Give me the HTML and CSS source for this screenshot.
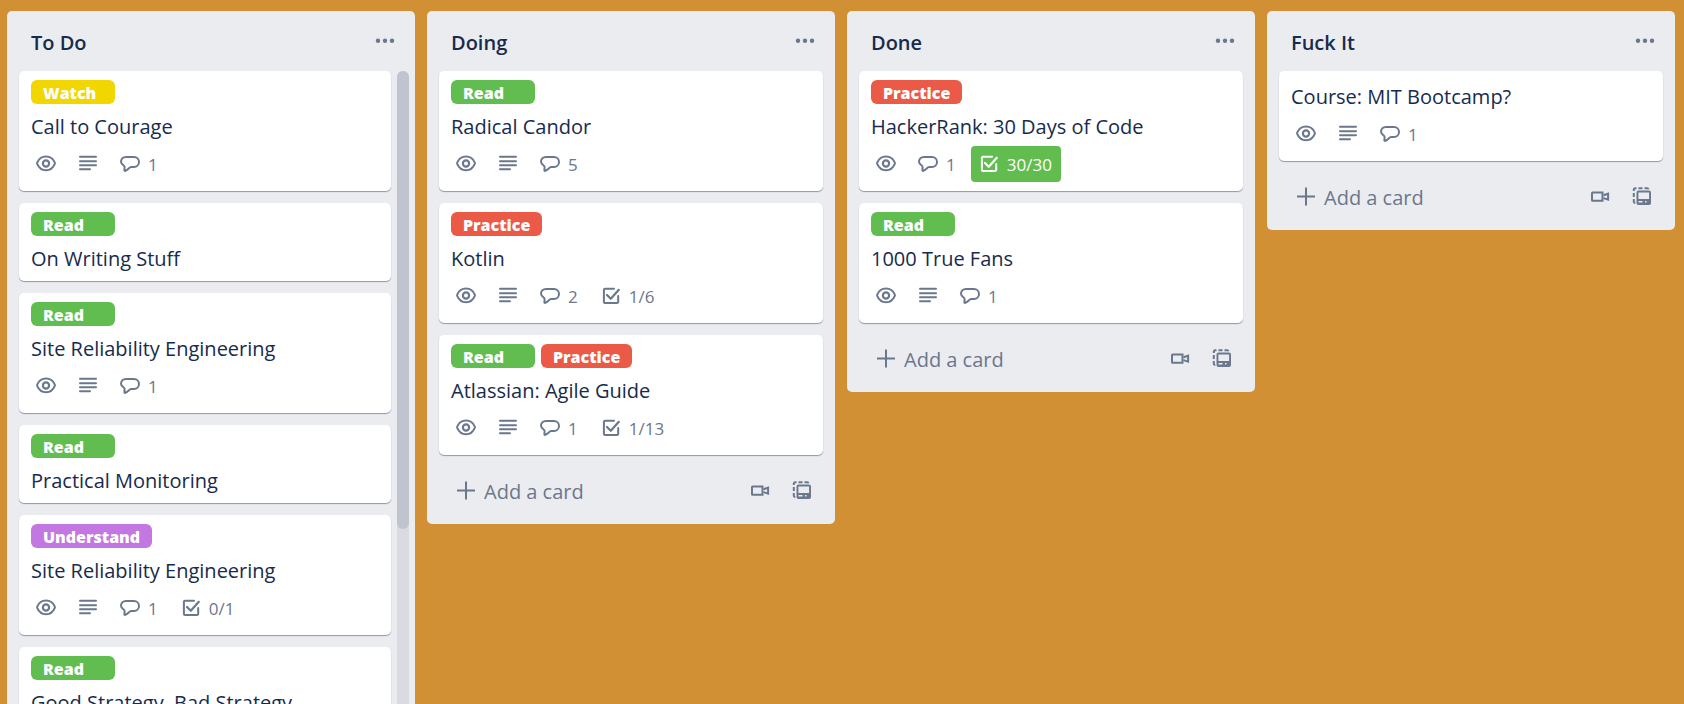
FILE: index.html
```html
<!DOCTYPE html>
<html lang="en">
<head>
    <meta charset="UTF-8">
    <meta name="viewport" content="width=device-width, initial-scale=1.0">
    <title>Learning Board</title>
    <link rel="stylesheet" href="styles.css">
</head>
<body>
    <!-- Icon sprite -->
    <svg class="sprite" aria-hidden="true">
        <symbol id="icon-more" viewBox="0 0 24 24">
            <circle cx="5" cy="11.700" r="2.200" fill="currentColor"/>
            <circle cx="12" cy="11.700" r="2.200" fill="currentColor"/>
            <circle cx="19" cy="11.700" r="2.200" fill="currentColor"/>
        </symbol>
        <symbol id="icon-eye" viewBox="0 0 24 24">
            <path d="M12 4.500c4.200 0 7.300 2.600 8.800 6.100a2 2 0 0 1 0 1.300C19.300 15.500 16.200 18.300 12 18.300S4.700 15.500 3.200 11.900a2 2 0 0 1 0-1.300C4.700 7.100 7.800 4.500 12 4.500z" fill="none" stroke="currentColor" stroke-width="2"/>
            <circle cx="12" cy="11.500" r="3.100" fill="none" stroke="currentColor" stroke-width="2.200"/>
        </symbol>
        <symbol id="icon-description" viewBox="0 0 24 24">
            <path d="M4 4.700h16M4 9.200h16M4 13.300h16M4 17.300h10" fill="none" stroke="currentColor" stroke-width="2" stroke-linecap="round"/>
        </symbol>
        <symbol id="icon-comment" viewBox="0 0 24 24">
            <path d="M8 5h8a5 5 0 0 1 0 10h-2.800c-2 0-3.200 3-6 3.900-.6.1-.9-.2-.8-.7l.2-3.200c0-.8-.4-1.200-1.200-1.800C4 12.200 3 11.400 3 9.800 3 7 5.200 5 8 5z" fill="none" stroke="currentColor" stroke-width="2" stroke-linejoin="round"/>
        </symbol>
        <symbol id="icon-check" viewBox="0 0 24 24">
            <path d="M15 4.700H6A1.200 1.200 0 0 0 4.900 6v12A1.200 1.200 0 0 0 6 19.100h12a1.200 1.200 0 0 0 1.200-1.100v-6" fill="none" stroke="currentColor" stroke-width="2" stroke-linecap="round"/>
            <path d="M8 11l3.800 3.800 8-9" fill="none" stroke="currentColor" stroke-width="2.200" stroke-linecap="round" stroke-linejoin="round"/>
        </symbol>
        <symbol id="icon-add" viewBox="0 0 24 24">
            <path d="M12 1.500v18M3 10.500h18" fill="none" stroke="currentColor" stroke-width="2"/>
        </symbol>
        <symbol id="icon-video" viewBox="0 0 24 24">
            <path d="M4.500 7.500h10v8.200h-10a.5.5 0 0 1-.5-.5V8a.5.5 0 0 1 .5-.5z" fill="none" stroke="currentColor" stroke-width="2"/>
            <path d="M15.500 10.300l4.600-1.600v6l-4.600-1.600" fill="none" stroke="currentColor" stroke-width="2"/>
        </symbol>
        <symbol id="icon-template" viewBox="0 0 24 24">
            <path d="M3.800 6V4.500a1.500 1.500 0 0 1 1.500-1.300h1.200M8.500 3.200h4M14.500 3.200H17a1.500 1.500 0 0 1 1.500 1.100M3.800 8v4M3.800 14v2.500a1.500 1.500 0 0 0 1.500 1.500" fill="none" stroke="currentColor" stroke-width="2"/>
            <path fill-rule="evenodd" d="M8.500 5.500h10.500a2 2 0 0 1 2 2v10.500a2 2 0 0 1-2 2H8.500a2 2 0 0 1-2-2V7.500a2 2 0 0 1 2-2zM8.400 7.500v6.500h10.700V7.500zM8.500 16v1.600h4v-1.600zM15 16v1.600h1.500v-1.600z" fill="currentColor"/>
        </symbol>
    </svg>

    <main class="board">
        <section class="list list-scroll">
            <header class="list-header">
                <h2>To Do</h2>
                <button class="icon-button" aria-label="List actions"><svg class="icon"><use href="#icon-more"/></svg></button>
            </header>
            <div class="list-body">
                <div class="cards">
                    <article class="card">
                        <div class="labels"><span class="label yellow">Watch</span></div>
                        <a class="card-title" href="#">Call to Courage</a>
                        <div class="badges">
                            <span class="badge"><svg class="icon"><use href="#icon-eye"/></svg></span>
                            <span class="badge"><svg class="icon"><use href="#icon-description"/></svg></span>
                            <span class="badge"><svg class="icon"><use href="#icon-comment"/></svg><span class="badge-text">1</span></span>
                        </div>
                    </article>
                    <article class="card">
                        <div class="labels"><span class="label green">Read</span></div>
                        <a class="card-title" href="#">On Writing Stuff</a>
                    </article>
                    <article class="card">
                        <div class="labels"><span class="label green">Read</span></div>
                        <a class="card-title" href="#">Site Reliability Engineering</a>
                        <div class="badges">
                            <span class="badge"><svg class="icon"><use href="#icon-eye"/></svg></span>
                            <span class="badge"><svg class="icon"><use href="#icon-description"/></svg></span>
                            <span class="badge"><svg class="icon"><use href="#icon-comment"/></svg><span class="badge-text">1</span></span>
                        </div>
                    </article>
                    <article class="card">
                        <div class="labels"><span class="label green">Read</span></div>
                        <a class="card-title" href="#">Practical Monitoring</a>
                    </article>
                    <article class="card">
                        <div class="labels"><span class="label purple">Understand</span></div>
                        <a class="card-title" href="#">Site Reliability Engineering</a>
                        <div class="badges">
                            <span class="badge"><svg class="icon"><use href="#icon-eye"/></svg></span>
                            <span class="badge"><svg class="icon"><use href="#icon-description"/></svg></span>
                            <span class="badge"><svg class="icon"><use href="#icon-comment"/></svg><span class="badge-text">1</span></span>
                            <span class="badge"><svg class="icon"><use href="#icon-check"/></svg><span class="badge-text">0/1</span></span>
                        </div>
                    </article>
                    <article class="card">
                        <div class="labels"><span class="label green">Read</span></div>
                        <a class="card-title" href="#">Good Strategy, Bad Strategy</a>
                    </article>
                </div>
                <div class="scroll-track"><div class="scroll-thumb"></div></div>
            </div>
        </section>

        <section class="list">
            <header class="list-header">
                <h2>Doing</h2>
                <button class="icon-button" aria-label="List actions"><svg class="icon"><use href="#icon-more"/></svg></button>
            </header>
            <div class="list-body">
                <div class="cards">
                    <article class="card">
                        <div class="labels"><span class="label green">Read</span></div>
                        <a class="card-title" href="#">Radical Candor</a>
                        <div class="badges">
                            <span class="badge"><svg class="icon"><use href="#icon-eye"/></svg></span>
                            <span class="badge"><svg class="icon"><use href="#icon-description"/></svg></span>
                            <span class="badge"><svg class="icon"><use href="#icon-comment"/></svg><span class="badge-text">5</span></span>
                        </div>
                    </article>
                    <article class="card">
                        <div class="labels"><span class="label red">Practice</span></div>
                        <a class="card-title" href="#">Kotlin</a>
                        <div class="badges">
                            <span class="badge"><svg class="icon"><use href="#icon-eye"/></svg></span>
                            <span class="badge"><svg class="icon"><use href="#icon-description"/></svg></span>
                            <span class="badge"><svg class="icon"><use href="#icon-comment"/></svg><span class="badge-text">2</span></span>
                            <span class="badge"><svg class="icon"><use href="#icon-check"/></svg><span class="badge-text">1/6</span></span>
                        </div>
                    </article>
                    <article class="card">
                        <div class="labels"><span class="label green">Read</span><span class="label red">Practice</span></div>
                        <a class="card-title" href="#">Atlassian: Agile Guide</a>
                        <div class="badges">
                            <span class="badge"><svg class="icon"><use href="#icon-eye"/></svg></span>
                            <span class="badge"><svg class="icon"><use href="#icon-description"/></svg></span>
                            <span class="badge"><svg class="icon"><use href="#icon-comment"/></svg><span class="badge-text">1</span></span>
                            <span class="badge"><svg class="icon"><use href="#icon-check"/></svg><span class="badge-text">1/13</span></span>
                        </div>
                    </article>
                </div>
            </div>
            <footer class="list-footer">
                <button class="add-card"><svg class="icon"><use href="#icon-add"/></svg>Add a card</button>
                <button class="icon-button" aria-label="Record video"><svg class="icon"><use href="#icon-video"/></svg></button>
                <button class="icon-button" aria-label="Create from template"><svg class="icon"><use href="#icon-template"/></svg></button>
            </footer>
        </section>

        <section class="list">
            <header class="list-header">
                <h2>Done</h2>
                <button class="icon-button" aria-label="List actions"><svg class="icon"><use href="#icon-more"/></svg></button>
            </header>
            <div class="list-body">
                <div class="cards">
                    <article class="card">
                        <div class="labels"><span class="label red">Practice</span></div>
                        <a class="card-title" href="#">HackerRank: 30 Days of Code</a>
                        <div class="badges">
                            <span class="badge"><svg class="icon"><use href="#icon-eye"/></svg></span>
                            <span class="badge"><svg class="icon"><use href="#icon-comment"/></svg><span class="badge-text">1</span></span>
                            <span class="badge complete"><svg class="icon"><use href="#icon-check"/></svg><span class="badge-text">30/30</span></span>
                        </div>
                    </article>
                    <article class="card">
                        <div class="labels"><span class="label green">Read</span></div>
                        <a class="card-title" href="#">1000 True Fans</a>
                        <div class="badges">
                            <span class="badge"><svg class="icon"><use href="#icon-eye"/></svg></span>
                            <span class="badge"><svg class="icon"><use href="#icon-description"/></svg></span>
                            <span class="badge"><svg class="icon"><use href="#icon-comment"/></svg><span class="badge-text">1</span></span>
                        </div>
                    </article>
                </div>
            </div>
            <footer class="list-footer">
                <button class="add-card"><svg class="icon"><use href="#icon-add"/></svg>Add a card</button>
                <button class="icon-button" aria-label="Record video"><svg class="icon"><use href="#icon-video"/></svg></button>
                <button class="icon-button" aria-label="Create from template"><svg class="icon"><use href="#icon-template"/></svg></button>
            </footer>
        </section>

        <section class="list">
            <header class="list-header">
                <h2>Fuck It</h2>
                <button class="icon-button" aria-label="List actions"><svg class="icon"><use href="#icon-more"/></svg></button>
            </header>
            <div class="list-body">
                <div class="cards">
                    <article class="card">
                        <a class="card-title" href="#">Course: MIT Bootcamp?</a>
                        <div class="badges">
                            <span class="badge"><svg class="icon"><use href="#icon-eye"/></svg></span>
                            <span class="badge"><svg class="icon"><use href="#icon-description"/></svg></span>
                            <span class="badge"><svg class="icon"><use href="#icon-comment"/></svg><span class="badge-text">1</span></span>
                        </div>
                    </article>
                </div>
            </div>
            <footer class="list-footer">
                <button class="add-card"><svg class="icon"><use href="#icon-add"/></svg>Add a card</button>
                <button class="icon-button" aria-label="Record video"><svg class="icon"><use href="#icon-video"/></svg></button>
                <button class="icon-button" aria-label="Create from template"><svg class="icon"><use href="#icon-template"/></svg></button>
            </footer>
        </section>
    </main>
</body>
</html>
```
FILE: styles.css
```css
* {
    box-sizing: border-box;
}
body {
    margin: 0;
    background: #d29034;
    color: #172b4d;
    font-family: "Segoe UI", "Open Sans", "Noto Sans", sans-serif;
    font-size: 20px;
    line-height: 34px;
}
button {
    border: none;
    background: none;
    color: inherit;
    font: inherit;
    cursor: pointer;
}
.sprite {
    display: none;
}
.icon {
    display: block;
    flex: none;
    width: 24px;
    height: 24px;
}

/* Board */
.board {
    display: grid;
    grid-template-columns: repeat(4, minmax(0, 1fr));
    gap: 12px;
    align-items: start;
    height: 100vh;
    padding: 11px 9px 0 7px;
    overflow: hidden;
}
.list {
    background: #ebecf0;
    border-radius: 5px;
}
.list-header {
    display: flex;
    justify-content: space-between;
    align-items: flex-start;
    height: 60px;
    padding: 14px 12px 0 24px;
}
.list-header h2 {
    margin: 0;
    font-size: 20px;
    font-weight: 600;
    line-height: 36px;
}
.icon-button {
    padding: 4px 6px;
    color: #6b778c;
}
.list-body {
    display: flex;
    gap: 6px;
    padding: 0 12px;
}
.cards {
    display: flex;
    flex: 1;
    flex-direction: column;
    gap: 12px;
    min-width: 0;
}

/* Scrolling list */
.list-scroll {
    display: flex;
    flex-direction: column;
    height: 100%;
    border-radius: 5px 5px 0 0;
}
.list-scroll .list-body {
    flex: 1;
    min-height: 0;
    padding-right: 6px;
    overflow: hidden;
}
.scroll-track {
    width: 12px;
    background: #dadbe2;
    border-radius: 6px;
}
.scroll-thumb {
    height: 70%;
    background: #bfc4ce;
    border-radius: 6px;
}

/* Cards */
.card {
    flex: none;
    padding: 9px 12px 3px;
    background: #fff;
    border-radius: 5px;
    box-shadow: 0 1px 1px #091e4266;
}
.labels {
    display: flex;
    gap: 6px;
    margin-bottom: 6px;
}
.label {
    min-width: 84px;
    height: 24px;
    padding: 1px 12px 0;
    border-radius: 6px;
    color: #fff;
    font-size: 16px;
    font-weight: 800;
    line-height: 24px;
}
.green {
    background: #61bd4f;
}
.yellow {
    background: #f2d600;
}
.red {
    background: #eb5a46;
}
.purple {
    background: #c377e0;
}
.card-title {
    display: block;
    margin-bottom: 2px;
    color: inherit;
    text-decoration: none;
}
.badges {
    display: flex;
    gap: 6px;
    margin-left: -3px;
    padding-bottom: 6px;
}
.badge {
    display: flex;
    align-items: center;
    height: 36px;
    padding: 0 6px;
    border-radius: 4px;
    color: #6b778c;
}
.badge-text {
    padding: 2px 3px 0 6px;
    font-size: 17px;
}
.complete {
    background: #61bd4f;
    color: #fff;
}

/* Add a card */
.list-footer {
    display: flex;
    align-items: center;
    gap: 6px;
    padding: 15px 15px 12px 27px;
    color: #6b778c;
}
.add-card {
    display: flex;
    flex: 1;
    align-items: center;
    gap: 6px;
    height: 42px;
    padding: 2px 0 0;
}
```
